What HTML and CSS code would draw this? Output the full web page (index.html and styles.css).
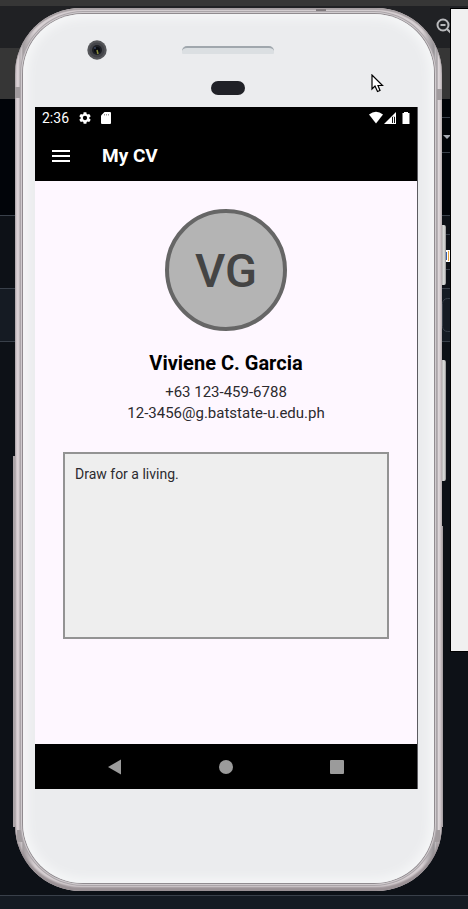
FILE: index.html
```html
<!DOCTYPE html>
<html lang="en">
<head>
<meta charset="utf-8">
<meta name="viewport" content="width=device-width, initial-scale=1">
<title>My CV</title>
<link rel="stylesheet" href="styles.css">
</head>
<body>
<div class="desktop" aria-hidden="true">
  <div class="strip strip-top"></div>
  <div class="strip strip-tabs"></div>
  <div class="strip strip-bar"></div>
  <div class="strip strip-black"></div>
  <div class="strip strip-navy"></div>
  <div class="strip strip-row"></div>
  <div class="strip strip-page"></div>
  <div class="strip strip-foot"></div>
  <svg class="edge-art" width="36" height="350" viewBox="0 0 36 350">
    <g fill="none" stroke="#b9babd" stroke-width="2"><circle cx="11" cy="25" r="5.5"/><path d="M8.500 25h5M15 29l5 5"/></g>
    <path d="M4 117.500h20M4 152.500h20M4 234.500h20M4 269.500h20" stroke="#39404a"/>
    <path d="M11 135h8l-4 4z" fill="#a5a9b2"/>
    <rect x="10.500" y="298.500" width="24" height="33" rx="5" fill="none" stroke="#39404a"/>
    <path d="M12 250h6v12h-6z" fill="#fff"/><path d="M12 252h3v8h-3z" fill="#345ba8"/><path d="M16 251h1v10h-1z" fill="#e6a33c"/>
  </svg>
  <div class="side-window"></div>
</div>

<main class="phone">
  <i class="key key-power"></i>
  <i class="key key-volume"></i>
  <i class="rim rim-left"></i>
  <i class="rim rim-right"></i>
  <i class="band band-top"></i>
  <i class="band band-tl"></i>
  <i class="band band-tr"></i>
  <i class="band band-bl"></i>
  <i class="band band-br"></i>
  <div class="face">
    <div class="forehead">
      <svg class="camera" width="20" height="20" viewBox="0 0 20 20" aria-hidden="true">
        <circle cx="10" cy="10" r="9.700" fill="#55565a"/><circle cx="10" cy="10" r="7.500" fill="#434449"/>
        <circle cx="10" cy="10" r="5" fill="#1c1e24"/><circle cx="10" cy="10" r="3" fill="#090b10"/>
        <circle cx="8" cy="8" r="1" fill="#39455e"/><path d="M10 10l1 4" stroke="#888b3d" stroke-width="1.500"/>
      </svg>
      <div class="speaker"></div>
      <div class="sensor"></div>
    </div>

    <div class="screen">
      <div class="status">
        <span>2:36</span>
        <svg width="12" height="12" viewBox="2 2 20 20" fill="#fff" aria-hidden="true"><path d="M19.140 12.940c.04-.3.060-.61.060-.94 0-.32-.02-.64-.07-.94l2.030-1.580a.49.490 0 0 0 .12-.61l-1.920-3.320a.49.490 0 0 0-.59-.22l-2.390.96c-.5-.38-1.030-.7-1.620-.94l-.36-2.540a.48.480 0 0 0-.48-.41h-3.840c-.24 0-.43.170-.47.410l-.36 2.540c-.59.240-1.130.57-1.620.94l-2.390-.96a.49.490 0 0 0-.59.220L2.740 8.870c-.12.210-.08.470.12.610l2.030 1.580c-.05.3-.09.630-.09.940s.02.640.07.940l-2.030 1.580a.49.490 0 0 0-.12.610l1.920 3.320c.12.220.37.290.59.220l2.390-.96c.5.380 1.030.7 1.620.94l.36 2.540c.05.240.24.410.48.410h3.840c.24 0 .44-.17.470-.41l.36-2.540c.59-.24 1.130-.56 1.620-.94l2.390.96c.22.080.47 0 .59-.22l1.920-3.320a.49.490 0 0 0-.12-.61zM12 15.600a3.600 3.600 0 1 1 0-7.200 3.600 3.600 0 0 1 0 7.200z"/></svg>
        <svg width="10" height="12" viewBox="0 0 10 12" aria-hidden="true"><path d="M3.500 0H9q1 0 1 1v10q0 1-1 1H1q-1 0-1-1V3.500z" fill="#fff"/><path d="M3.500 2v1.500M5.500 2v1.500M7.500 2v1.500" stroke="#999"/></svg>
        <svg class="radio" width="42" height="14" viewBox="0 0 42 14" fill="#fff" aria-hidden="true">
          <path d="M0 3.500Q7-2 14 3.500L7 12.500z"/>
          <path d="M15 13L27 1v12z"/><path d="M23 5.800h3V12h-3z" fill="#111"/><path d="M24 6h1v6h-1z"/>
          <path d="M35 1h4v1h1.500v11h-7V2H35z"/>
        </svg>
      </div>
      <header class="appbar">
        <button class="menu" aria-label="Open menu"><svg width="18" height="12" viewBox="0 0 18 12"><path d="M0 1h18M0 6h18M0 11h18" stroke="#fff" stroke-width="2"/></svg></button>
        <h1>My CV</h1>
      </header>
      <section class="profile">
        <div class="avatar">VG</div>
        <h2>Viviene C. Garcia</h2>
        <p class="contact">+63 123-459-6788</p>
        <p class="contact">12-3456@g.batstate-u.edu.ph</p>
        <p class="about">Draw for a living.</p>
      </section>
      <nav class="softkeys">
        <button aria-label="Back"><svg width="16" height="16" viewBox="0 0 16 16"><path d="M1 8L14 0.500v15z" fill="#9b9b9b"/></svg></button>
        <button aria-label="Home"><svg width="16" height="16" viewBox="0 0 16 16"><circle cx="8" cy="8" r="7" fill="#9b9b9b"/></svg></button>
        <button aria-label="Recent apps"><svg width="16" height="16" viewBox="0 0 16 16"><rect x="1" y="1" width="14" height="14" rx="1" fill="#9b9b9b"/></svg></button>
      </nav>
    </div>
  </div>
</main>

<svg class="cursor" width="13" height="19" viewBox="0 0 13 19" aria-hidden="true"><path d="M1 1v14l3-3 2.500 5.500 2.500-1L7 11.500h4.500z" fill="#fff" stroke="#000" stroke-width="1.200"/></svg>
</body>
</html>
```
FILE: styles.css
```css
* { box-sizing: border-box; }

body {
  position: relative;
  margin: 0;
  padding: 8px 26px 17px 15px;
  min-height: 100vh;
  background: #0d1117;
  font-family: Roboto, sans-serif;
}

h1, h2, p { margin: 0; }

button {
  display: flex;
  align-items: center;
  justify-content: center;
  padding: 0;
  border: 0;
  background: none;
}

/* Windows behind the emulator */
.desktop {
  position: absolute;
  inset: 0;
  display: flex;
  flex-direction: column;
  overflow: hidden;
}
.strip-top { height: 6px; background: #363636; }
.strip-tabs { height: 42px; background: #202124; }
.strip-bar { height: 51px; background: #363636; }
.strip-black { height: 117px; background: #010409; border-bottom: 1px solid #39404a; }
.strip-navy { height: 72px; background: #0d1117; }
.strip-row {
  height: 54px;
  background: #151b23;
  border: solid #39404a;
  border-width: 1px 0;
}
.strip-page { flex: 1; }
.strip-foot { height: 14px; background: #151b23; border-top: 1px solid #39404a; }
.edge-art { position: absolute; top: 0; right: 0; }
.side-window {
  position: absolute;
  top: 8px;
  right: 0;
  width: 18px;
  height: 644px;
  background: #f0f0f0;
  border: solid #000;
  border-width: 1px 0 1px 1px;
}

/* Phone body */
.phone {
  position: relative;
  padding: 6px 8px 8px;
  border-radius: 66px;
  background: linear-gradient(90deg, #b5adb1 0, #dbd2d6 2px, #d5cdd1 4px, #aaa4a8 5px, #d4ced1 6px, #a39da0 8px, #d8d1d4 20px, #d8d1d4 calc(100% - 20px), #969397 calc(100% - 8px), #c9c5c8 calc(100% - 6px), #8f8b8f calc(100% - 5px), #dfd8db calc(100% - 4px), #c9c1c4 100%);
  box-shadow: inset 0 2px 1px #a69fa2, inset 0 -4px 2px #9a9195;
}
.rim {
  position: absolute;
  top: 448px;
  bottom: 64px;
  width: 2px;
  background: #aaa3a7;
}
.rim-left { left: -2px; }
.rim-right { right: -1px; width: 1px; top: 518px; }
.key {
  position: absolute;
  right: -4px;
  width: 4px;
  background: linear-gradient(90deg, #b5b5b5, #e3e4e3 2px, #8c8c8c);
  border-radius: 0 2px 2px 0;
}
.key-power { top: 217px; height: 60px; }
.key-volume { top: 352px; height: 121px; }
.band { position: absolute; width: 8px; height: 11px; background: #a19b9e; }
.band-top { top: 1px; left: 301px; width: 10px; height: 4px; background: #817b7e; }
.band-tl { top: 79px; left: 0; }
.band-tr { top: 81px; right: 0; }
.band-bl { bottom: 49px; left: 2px; height: 12px; }
.band-br { bottom: 49px; right: 2px; height: 12px; }

.face {
  position: relative;
  padding: 0 17px 94px 12px;
  border-radius: 60px;
  background: #ebecee;
  box-shadow: 0 0 0 1px #908b8f, 0 0 0 2px #d0cbce, 0 0 0 3px #aba5a9, inset 0 0 10px 5px #f5f6f7;
}
.forehead {
  display: grid;
  grid-template-columns: 1fr 92px 1fr;
  grid-template-rows: 24px 20px 22px 27px;
  padding-left: 4px;
}
.camera { grid-area: 2 / 1; margin: 2px 0 0 48px; }
.speaker {
  grid-area: 2 / 2;
  align-self: end;
  margin-bottom: 4px;
  height: 8px;
  border-radius: 5px 5px 1px 1px;
  border-top: 2px solid #a0a7ad;
  background: #dbdfe2;
}
.sensor {
  grid-area: 3 / 2 / 5 / 2;
  justify-self: center;
  margin-top: 23px;
  width: 34px;
  height: 14px;
  border-radius: 7px;
  background: #202127;
}

/* App */
.screen { background: #fef7ff; box-shadow: 1px 0 #5c5b60; }
.status {
  display: flex;
  align-items: center;
  gap: 10px;
  height: 22px;
  padding: 0 6px 0 7px;
  background: #000;
  color: #fff;
  font-size: 14px;
  line-height: 22px;
}
.radio { margin-left: auto; }
.appbar {
  display: flex;
  align-items: center;
  gap: 32px;
  height: 52px;
  padding: 2px 0 0 17px;
  background: #000;
  color: #fff;
}
.menu { width: 18px; height: 48px; }
.appbar h1 { font-size: 19px; line-height: 24px; font-weight: 700; }
.profile {
  display: flex;
  flex-direction: column;
  align-items: center;
  padding: 28px 28px 105px;
  color: #2c2a2e;
}
.avatar {
  display: flex;
  align-items: center;
  justify-content: center;
  width: 122px;
  height: 122px;
  margin-bottom: 20px;
  border: 4px solid #666;
  border-radius: 50%;
  background: #b4b4b4;
  color: #444;
  font-size: 47px;
  font-weight: 500;
}
.profile h2 {
  margin-bottom: 7px;
  color: #000;
  font-size: 20px;
  font-weight: 700;
  line-height: 24px;
}
.contact { font-size: 15px; line-height: 21px; }
.about {
  align-self: stretch;
  min-height: 187px;
  margin-top: 28px;
  padding: 10px;
  border: 2px solid #939393;
  background: #eee;
  font-size: 14px;
  line-height: 20px;
}
.softkeys {
  display: flex;
  justify-content: center;
  gap: 63px;
  height: 45px;
  background: #000;
}
.softkeys button { width: 48px; }

.cursor { position: absolute; top: 74px; left: 371px; }
```
